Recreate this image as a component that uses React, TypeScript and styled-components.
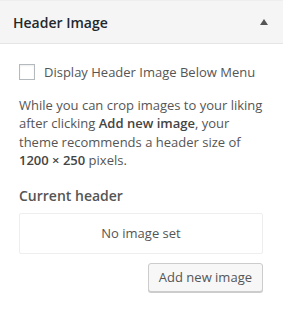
import React from "react";
import styled, { createGlobalStyle } from "styled-components";

const Global = createGlobalStyle`
  html, body { margin: 0; padding: 0; background: #fff; }
  body { font-family: "Open Sans", "Liberation Sans", sans-serif; color: #555; -webkit-font-smoothing: antialiased; }
  * { box-sizing: border-box; }
`;

const Panel = styled.div`
  width: 283px;
  height: 322px;
  background: #fff;
`;

const Header = styled.div`
  height: 44px;
  background: #f5f5f5;
  border-top: 1px solid #eee;
  border-bottom: 1px solid #e5e5e5;
  display: flex;
  align-items: center;
  justify-content: space-between;
  padding: 0 15px 0 13px;
`;

const Title = styled.h3`
  margin: 0;
  font-size: 14px;
  font-weight: 600;
  color: #23282d;
`;

const Arrow = styled.span`
  width: 0;
  height: 0;
  border-left: 4px solid transparent;
  border-right: 4px solid transparent;
  border-bottom: 6px solid #555;
  margin-top: -1px;
`;

const Body = styled.div`
  padding: 19px 20px 0 19px;
  display: flex;
  flex-direction: column;
`;

const CheckRow = styled.label`
  display: flex;
  align-items: center;
  gap: 9px;
  font-size: 13px;
  line-height: 18px;
  color: #555;
  white-space: nowrap;
`;

const Box = styled.span`
  width: 16px;
  height: 16px;
  border: 1px solid #b4b9be;
  background: #fff;
  box-shadow: inset 0 1px 2px rgba(0, 0, 0, 0.07);
  flex: none;
`;

const Desc = styled.p`
  margin: 15px 0 0;
  font-size: 13px;
  line-height: 18.4px;
  color: #555;
  b { font-weight: 600; color: #444; }
`;

const SubTitle = styled.div`
  margin-top: 16px;
  font-size: 14px;
  font-weight: 600;
  color: #555;
  line-height: 20px;
`;

const Placeholder = styled.div`
  margin-top: 7px;
  height: 41px;
  border: 1px solid #eee;
  border-radius: 2px;
  display: flex;
  align-items: center;
  justify-content: center;
  font-size: 13px;
  color: #555;
`;

const Actions = styled.div`
  display: flex;
  justify-content: flex-end;
  margin-top: 9px;
`;

const Button = styled.button`
  height: 29px;
  padding: 0 10px;
  font-family: inherit;
  font-size: 13px;
  color: #555;
  background: #f7f7f7;
  border: 1px solid #ccc;
  border-radius: 3px;
  box-shadow: 0 1px 0 #ccc;
  line-height: 27px;
`;

export default function App() {
  return (
    <Panel>
      <Global />
      <Header>
        <Title>Header Image</Title>
        <Arrow />
      </Header>
      <Body>
        <CheckRow>
          <Box />
          Display Header Image Below Menu
        </CheckRow>
        <Desc>
          While you can crop images to your liking after clicking <b>Add new image</b>, your theme recommends a header size of <b>1200 × 250</b> pixels.
        </Desc>
        <SubTitle>Current header</SubTitle>
        <Placeholder>No image set</Placeholder>
        <Actions>
          <Button>Add new image</Button>
        </Actions>
      </Body>
    </Panel>
  );
}
